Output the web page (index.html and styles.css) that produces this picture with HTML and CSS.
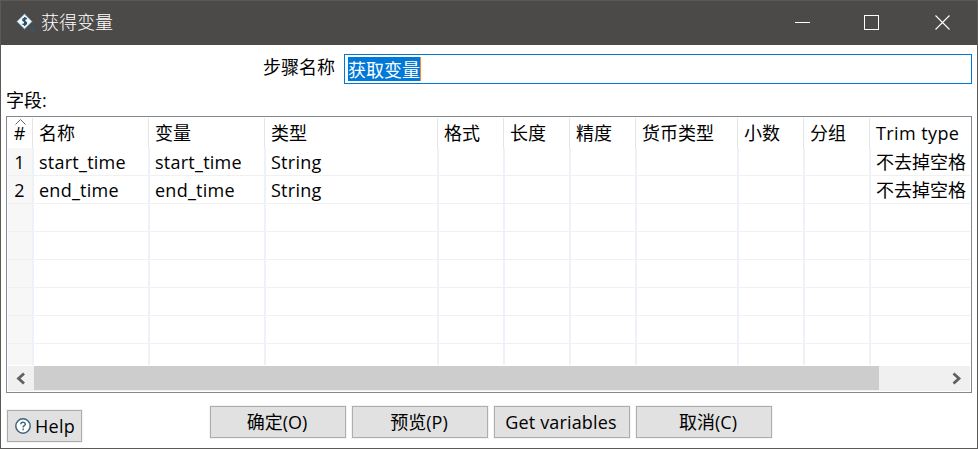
FILE: index.html
```html
<!DOCTYPE html>
<html lang="zh-CN">
<head>
<meta charset="utf-8">
<title>获得变量</title>
<link rel="stylesheet" href="styles.css">
</head>
<body>
<div class="window">
  <header class="titlebar">
    <svg class="app-icon" width="20" height="20" viewBox="0 0 20 20">
      <path d="M8.500 .8 16.300 8.500 8.500 16.200.7 8.500z" fill="#f4f8fb" stroke="#4a7592" stroke-width="1"/>
      <path d="M10.700 6.100C9.400 4.900 6.700 5.200 6.800 6.900c.1 1.600 3.700 1.400 3.700 3.200 0 1.700-2.700 1.900-4 .7M8.700 3.900v9" fill="none" stroke="#294f68" stroke-width="1.500"/>
      <path d="M14.300 14.300l3.600 3.600M18.200 15v3.200H15" fill="none" stroke="#345a73" stroke-width="1"/>
    </svg>
    <h1 class="title">获得变量</h1>
    <svg class="controls" width="156" height="15" viewBox="0 0 156 15" fill="none" stroke="#fff">
      <path d="M0 7.500h15M69.500 .5h14v14h-14z" shape-rendering="crispEdges"/>
      <path d="M140.500 .5l14 14M154.500 .5l-14 14" stroke-width="1.100"/>
    </svg>
  </header>
  <main class="content">
    <div class="step">
      <label class="step-label">步骤名称</label>
      <div class="step-input"><span class="selected">获取变量</span></div>
    </div>
    <div class="fields-label">字段:</div>
    <section class="table">
      <div class="row head">
        <div class="num"><svg class="sort" width="11" height="6" viewBox="0 0 11 6"><path d="M.5 5.500l5-5 5 5" fill="none" stroke="#666"/></svg>#</div><div>名称</div><div>变量</div><div>类型</div><div>格式</div><div>长度</div><div>精度</div><div>货币类型</div><div>小数</div><div>分组</div><div><span class="trim">Trim type</span></div>
      </div>
      <div class="row"><div class="num">1</div><div class="lat">start_time</div><div class="lat">start_time</div><div class="lat">String</div><div></div><div></div><div></div><div></div><div></div><div></div><div>不去掉空格</div></div>
      <div class="row"><div class="num">2</div><div class="lat">end_time</div><div class="lat">end_time</div><div class="lat">String</div><div></div><div></div><div></div><div></div><div></div><div></div><div>不去掉空格</div></div>
      <div class="row"><div class="num"></div><div></div><div></div><div></div><div></div><div></div><div></div><div></div><div></div><div></div><div></div></div>
      <div class="row"><div class="num"></div><div></div><div></div><div></div><div></div><div></div><div></div><div></div><div></div><div></div><div></div></div>
      <div class="row"><div class="num"></div><div></div><div></div><div></div><div></div><div></div><div></div><div></div><div></div><div></div><div></div></div>
      <div class="row"><div class="num"></div><div></div><div></div><div></div><div></div><div></div><div></div><div></div><div></div><div></div><div></div></div>
      <div class="row"><div class="num"></div><div></div><div></div><div></div><div></div><div></div><div></div><div></div><div></div><div></div><div></div></div>
      <div class="row last"><div class="num"></div><div></div><div></div><div></div><div></div><div></div><div></div><div></div><div></div><div></div><div></div></div>
      <div class="scrollbar">
        <svg class="arrow" width="26" height="25" viewBox="0 0 26 25"><path d="M16 7.500l-5.500 5 5.500 5" fill="none" stroke="#606060" stroke-width="2.800"/></svg>
        <div class="thumb"></div>
        <svg class="arrow end" width="26" height="25" viewBox="0 0 26 25"><path d="M9.500 7.500l5.500 5-5.500 5" fill="none" stroke="#606060" stroke-width="2.800"/></svg>
      </div>
    </section>
    <footer class="footer">
      <button class="help"><svg width="16" height="16" viewBox="0 0 16 16" fill="none" stroke="#3f6482"><circle cx="8" cy="8" r="7.200" fill="#fff" stroke-width="1.500"/><path d="M5.800 6.300c0-2.900 4.600-2.700 4.500-.1C10.300 7.800 8.100 7.600 8.100 9.400M8.100 10.600v1.600" stroke-width="1.500"/></svg><span>Help</span></button>
      <div class="actions">
        <button>确定(O)</button><button>预览(P)</button><button class="get">Get variables</button><button class="cancel">取消(C)</button>
      </div>
    </footer>
  </main>
</div>
</body>
</html>
```
FILE: styles.css
```css
* { box-sizing: border-box; }
body {
  margin: 0;
  background: #fff;
  color: #000;
  font: 18px/26px "Open Sans", "Noto Sans CJK SC", sans-serif;
}
.window {
  width: 978px;
  height: 449px;
  border: 1px solid #5b5a58;
  overflow: hidden;
}
.titlebar {
  height: 44px;
  display: flex;
  align-items: center;
  padding: 0 26px 2px 15px;
  background: #4c4a48;
  color: #fff;
}
.app-icon { margin-top: 2px; }
.title {
  margin: -2px 0 0 5px;
  font-size: 18px;
  font-weight: 300;
  font-family: "Noto Sans CJK SC", sans-serif;
}
.controls { margin-left: auto; }
.content { padding: 9px 5px 0; }
.step { display: flex; justify-content: flex-end; }
.step-label { margin-right: 9px; }
.step-input {
  width: 628px;
  height: 30px;
  border: 1px solid #0078d7;
  padding: 2px 3px;
  display: flex;
}
.selected {
  height: 24px;
  line-height: 26px;
  background: #0078d7;
  color: #fff;
  border-right: 1px solid #ff8728;
}
.fields-label { height: 32px; line-height: 32px; }
.table {
  width: 966px;
  height: 277px;
  border: 1px solid #828790;
  padding: 1px;
}
.row {
  display: grid;
  grid-template-columns: 26px 116px 116px 173px 66px 66px 66px 102px 66px 66px 99px;
  grid-template-rows: 100%;
  height: 28px;
}
.row > div {
  border-right: 2px solid #edf2f9;
  border-bottom: 1px solid #f0f0f0;
  padding-left: 5px;
  line-height: 29px;
  white-space: nowrap;
}
.row > div:last-child { border-right: 0; }
.row > .num { background: #f7f7f7; padding: 0 1px 0 0; text-align: center; position: relative; }
.lat { letter-spacing: .25px; }
.trim { letter-spacing: .4px; }
.head { height: 30px; }
.head > div {
  border-right: 1px solid #e5e5e5;
  border-bottom: 0;
  margin-right: 1px;
  line-height: 31px;
}
.row.head > .num { background: #fff; padding-right: 1px; line-height: 30px; }
.sort { position: absolute; left: 7px; top: 1px; }
.last { height: 21px; }
.last > div { border-bottom: 0; }
.scrollbar {
  height: 25px;
  margin-top: 1px;
  display: flex;
  background: #f0f0f0;
}
.thumb { width: 845px; height: 24px; background: #cdcdcd; }
.end { margin-left: auto; }
.footer { display: flex; padding: 13px 0 0 1px; }
button {
  font: inherit;
  color: inherit;
  width: 136px;
  height: 32px;
  padding: 0 2px 1px 0;
  border: 1px solid #adadad;
  background: #e1e1e1;
  outline: 1px solid #f3f3f3;
}
.get { letter-spacing: .15px; }
.cancel { padding-left: 10px; }
.help {
  width: 75px;
  margin: 4px 128px 0 0;
  display: flex;
  align-items: center;
  padding: 0 0 0 7px;
  gap: 4px;
  letter-spacing: .3px;
}
.actions { display: flex; gap: 6px; }
```
